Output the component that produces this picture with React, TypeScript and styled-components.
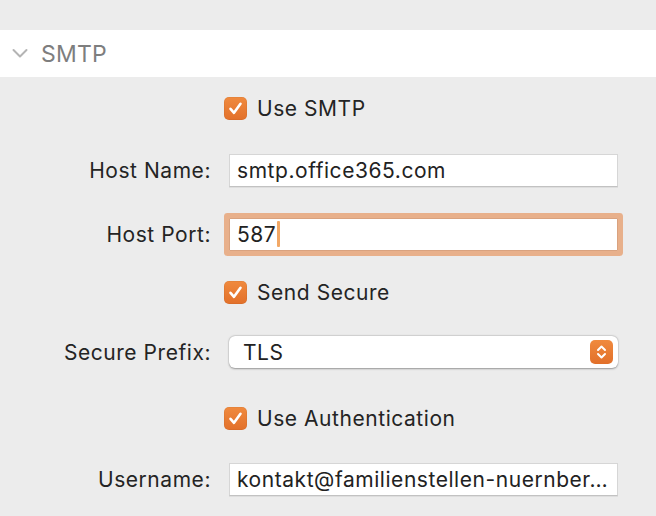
import React from 'react';
import styled, { createGlobalStyle } from 'styled-components';

// --------------  Elements
const Global = createGlobalStyle`
  html, body {
    margin:0;
    padding:0;
    background:#ececec;
  }
  body {
    font-family: Inter, "Noto Sans", "Liberation Sans", sans-serif;
    color:#262626;
    -webkit-font-smoothing: antialiased;
  }
`;

const Page = styled.div`
  width:656px;
  height:516px;
  padding-top:30px;
  box-sizing:border-box;
  overflow:hidden;
`;

const Header = styled.div`
  height:47px;
  background:#fff;
  display:flex;
  align-items:center;
  padding-left:12px;
  gap:13px;
`;

const HeaderTitle = styled.span`
  font-size:23px;
  color:#7e7e7e;
  letter-spacing:0.2px;
`;

const Form = styled.div`
  display:flex;
  flex-direction:column;
`;

const Row = styled.div<{ h: number }>`
  height:${p => p.h}px;
  display:flex;
  align-items:center;
`;

const Label = styled.div`
  width:211px;
  text-align:right;
  font-size:21px;
  letter-spacing:0.55px;
  color:#242424;
  flex-shrink:0;
`;

const Control = styled.div<{ inset?: number }>`
  margin-left:${p => 18 - (p.inset || 0)}px;
  width:${p => 389 + (p.inset || 0)}px;
  display:flex;
  align-items:center;
`;

const CheckLabel = styled.label`
  display:flex;
  align-items:center;
  gap:10px;
  font-size:21px;
  letter-spacing:0.55px;
  color:#242424;
`;

const Box = styled.span`
  width:23px;
  height:23px;
  border-radius:5px;
  background:linear-gradient(#f08a3e, #e2702a);
  display:flex;
  align-items:center;
  justify-content:center;
  box-shadow: inset 0 0 0 0.5px rgba(0,0,0,0.08);
`;

const Input = styled.div<{ focused?: boolean }>`
  width:100%;
  height:33px;
  box-sizing:border-box;
  background:#fff;
  border:1px solid ${p => p.focused ? '#d9a27f' : '#d6d6d6'};
  border-bottom-color:${p => p.focused ? '#d9a27f' : '#c2c2c2'};
  box-shadow:${p => p.focused ? '0 0 0 5px #e8b08b' : '0 1px 0 rgba(0,0,0,0.06)'};
  border-radius:${p => p.focused ? '1px' : '0'};
  display:flex;
  align-items:center;
  padding-left:7px;
  font-size:21px;
  letter-spacing:0.55px;
  color:#222;
  white-space:nowrap;
  overflow:hidden;
`;

const Caret = styled.span`
  display:inline-block;
  width:2.5px;
  height:26px;
  border-radius:1px;
  background:#f2a866;
  margin-left:1px;
`;

const Popup = styled.div`
  width:100%;
  height:32px;
  box-sizing:border-box;
  background:#fff;
  border-radius:6px;
  box-shadow:0 0.5px 2px rgba(0,0,0,0.35), 0 0 0 0.5px rgba(0,0,0,0.06);
  display:flex;
  align-items:center;
  justify-content:space-between;
  padding-left:14px;
  padding-right:5px;
  font-size:21px;
  letter-spacing:0.55px;
  color:#222;
`;

const Stepper = styled.span`
  width:23px;
  height:24px;
  border-radius:5px;
  background:linear-gradient(#f08a3e, #e2702a);
  display:flex;
  align-items:center;
  justify-content:center;
`;

// --------------  Functions

function Check({ text }: { text: string }) {
    return (
        <CheckLabel>
            <Box>
                <svg width="15" height="15" viewBox="0 0 15 15">
                    <path d="M2.5 7.8 L6 11.8 L12.5 2.8" fill="none" stroke="#fff" strokeWidth="2.6" strokeLinecap="round" strokeLinejoin="round" />
                </svg>
            </Box>
            {text}
        </CheckLabel>
    )
}

export default function App() {
    return (
        <Page>
            <Global />
            <Header>
                <svg width="16" height="11" viewBox="0 0 16 11">
                    <path d="M1.5 2 L8 8.5 L14.5 2" fill="none" stroke="#b4b4b4" strokeWidth="2" strokeLinecap="round" strokeLinejoin="round" />
                </svg>
                <HeaderTitle>SMTP</HeaderTitle>
            </Header>
            <Form>
                <Row h={62}>
                    <Label />
                    <Control inset={5}><Check text="Use SMTP" /></Control>
                </Row>
                <Row h={62}>
                    <Label>Host Name:</Label>
                    <Control><Input>smtp.office365.com</Input></Control>
                </Row>
                <Row h={66}>
                    <Label>Host Port:</Label>
                    <Control><Input focused>587<Caret /></Input></Control>
                </Row>
                <Row h={50}>
                    <Label />
                    <Control inset={5}><Check text="Send Secure" /></Control>
                </Row>
                <Row h={70}>
                    <Label>Secure Prefix:</Label>
                    <Control>
                        <Popup>
                            TLS
                            <Stepper>
                                <svg width="11" height="16" viewBox="0 0 11 16">
                                    <path d="M2 6 L5.5 2.5 L9 6 M2 10 L5.5 13.5 L9 10" fill="none" stroke="#fff" strokeWidth="2" strokeLinecap="round" strokeLinejoin="round" />
                                </svg>
                            </Stepper>
                        </Popup>
                    </Control>
                </Row>
                <Row h={62}>
                    <Label />
                    <Control inset={5}><Check text="Use Authentication" /></Control>
                </Row>
                <Row h={60}>
                    <Label>Username:</Label>
                    <Control><Input>kontakt@familienstellen-nuernber…</Input></Control>
                </Row>
            </Form>
        </Page>
    )
}
